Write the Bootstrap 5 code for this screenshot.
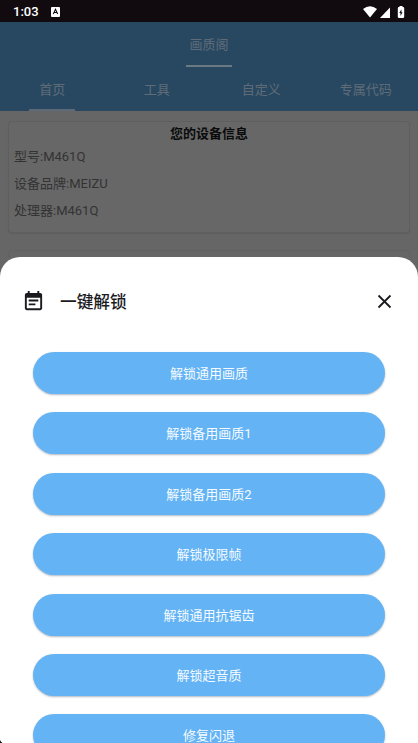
<!DOCTYPE html>
<html lang="zh-CN">
<head>
<meta charset="utf-8">
<meta name="viewport" content="width=device-width, initial-scale=1">
<title>画质阁</title>
<link href="https://cdn.jsdelivr.net/npm/bootstrap@5.3.0/dist/css/bootstrap.min.css" rel="stylesheet">
<style>
html, body { height: 743px; overflow: hidden; }
body { background: #666; font-family: Roboto, "Noto Sans CJK SC", sans-serif; font-size: 13px; line-height: 20px; color: #333; }
.statusbar { height: 22px; background: #110b10; color: #fff; padding: 1px 13px 0; }
.clock { font-size: 13px; font-weight: 500; width: 38px; }
.appbar { background: #284862; color: #5f6c77; height: 89px; }
.appbar .nav-link { color: inherit; padding: 0; border-radius: 0; }
.appbar .title-tab { height: 45px; width: 46px; padding-top: 13px; }
.title-tab span { white-space: nowrap; }
.title-line { height: 2px; width: 46px; background: #6b7983; margin-top: 10px; }
.sub-tabs { height: 44px; }
.appbar .sub-tabs .nav-link { height: 44px; padding-top: 13px; }
.sub-line { height: 2px; width: 46px; background: #5c6b77; margin-top: 9px; }
.backdrop-page { height: 146px; padding: 10px 8px 0 8px; }
.device { height: 112px; background: #676767; border: 1px solid #5f5f5f; border-radius: 4px; padding: 2px 5px; color: #333; box-shadow: 0 1px 1px #5e5e5e; }
.device h1 { font-size: 13px; line-height: 20px; margin-bottom: -1px; color: #0b0b0b; }
.device p { line-height: 27px; }
.next-panel { margin-top: 17px; height: 7px; border: 1px solid #616161; border-bottom: 0; border-radius: 4px 4px 0 0; }
.sheet { height: 486px; background: #fff; border-radius: 20px 20px 0 0; overflow: hidden; }
.sheet-head { height: 95px; padding: 0 25px 6px 22px; color: #1b1b1f; }
.sheet-head h2 { font-size: 16.7px; line-height: 24px; margin-left: 15px; padding-top: 3px; font-weight: 500; }
.actions { padding: 0 33px; gap: 18.4px; }
.actions .btn { --bs-btn-color: #f5fbff; --bs-btn-bg: #64b3f5; --bs-btn-hover-bg: #58a8ec; --bs-btn-hover-color: #fff; height: 42px; flex: none; font-size: 13px; line-height: 20px; padding: 8px 12px 6px; border: 0; box-shadow: 0 1px 2px rgba(60,80,105,.4); }
.screen-corner { left: 0; bottom: 0; }
</style>
</head>
<body>
<div class="d-flex flex-column">
  <div class="statusbar d-flex align-items-center">
    <span class="clock">1:03</span>
    <svg width="9" height="10" viewBox="0 0 9 10"><rect width="9" height="10" rx="1" fill="#fff"/><path d="M2.300 7 4.500 2.300 6.700 7M3.200 5.500h2.600" fill="none" stroke="#110b10" stroke-width="1.100"/></svg>
    <svg class="ms-auto" width="43" height="14" viewBox="0 0 43 14" fill="#fff"><path d="M1 4Q8 -1.500 15 4L8 12.600Z"/><path d="M18 13.100H28V2.600Z"/><path d="M37.500 1h3v1h.5q1.200 0 1.200 1.200v8.600q0 1.200-1.200 1.200h-4q-1.200 0-1.200-1.200V3.200Q35.800 2 37 2h.5z"/><path fill="#110b10" d="M39.400 4.300 37.300 8h1.200v3L40.600 7.200H39.400z"/></svg>
  </div>
  <header class="appbar">
    <nav class="nav justify-content-center"><a class="nav-link title-tab d-flex flex-column align-items-center" href="#"><span>画质阁</span><i class="title-line"></i></a></nav>
    <nav class="nav nav-fill sub-tabs row g-0">
      <a class="nav-link col-3 d-flex flex-column align-items-center" href="#"><span>首页</span><i class="sub-line"></i></a>
      <a class="nav-link col-3" href="#">工具</a>
      <a class="nav-link col-3" href="#">自定义</a>
      <a class="nav-link col-3" href="#">专属代码</a>
    </nav>
  </header>
  <main class="backdrop-page">
    <section class="device">
      <h1 class="text-center fw-bold">您的设备信息</h1>
      <p class="mb-0">型号:M461Q</p>
      <p class="mb-0">设备品牌:MEIZU</p>
      <p class="mb-0">处理器:M461Q</p>
    </section>
    <div class="next-panel"></div>
  </main>
  <section class="sheet" role="dialog" aria-label="一键解锁">
    <div class="sheet-head d-flex align-items-center">
      <svg width="23" height="23" viewBox="0 0 24 24" fill="currentColor"><path d="M17 10H7v2h10v-2zm2-7h-1V1h-2v2H8V1H6v2H5c-1.110 0-1.990.9-1.990 2L3 19c0 1.100.89 2 2 2h14c1.100 0 2-.9 2-2V5c0-1.100-.9-2-2-2zm0 16H5V8h14v11zm-5-5H7v2h7v-2z"/></svg>
      <h2 class="mb-0">一键解锁</h2>
      <svg class="ms-auto" width="17" height="17" viewBox="0 0 17 17" fill="none" stroke="currentColor" stroke-width="1.800"><path d="M2.500 2.500 14.500 14.500M14.500 2.500 2.500 14.500"/></svg>
    </div>
    <div class="actions d-flex flex-column">
      <button class="btn rounded-pill" type="button">解锁通用画质</button>
      <button class="btn rounded-pill" type="button">解锁备用画质1</button>
      <button class="btn rounded-pill" type="button">解锁备用画质2</button>
      <button class="btn rounded-pill" type="button">解锁极限帧</button>
      <button class="btn rounded-pill" type="button">解锁通用抗锯齿</button>
      <button class="btn rounded-pill" type="button">解锁超音质</button>
      <button class="btn rounded-pill" type="button">修复闪退</button>
    </div>
  </section>
</div>
<svg class="screen-corner position-absolute" width="3" height="3" viewBox="0 0 3 3"><path d="M0 0Q.8 2.200 2.500 3H0Z" fill="#111"/></svg>
<script src="https://cdn.jsdelivr.net/npm/bootstrap@5.3.0/dist/js/bootstrap.bundle.min.js"></script>
</body>
</html>
